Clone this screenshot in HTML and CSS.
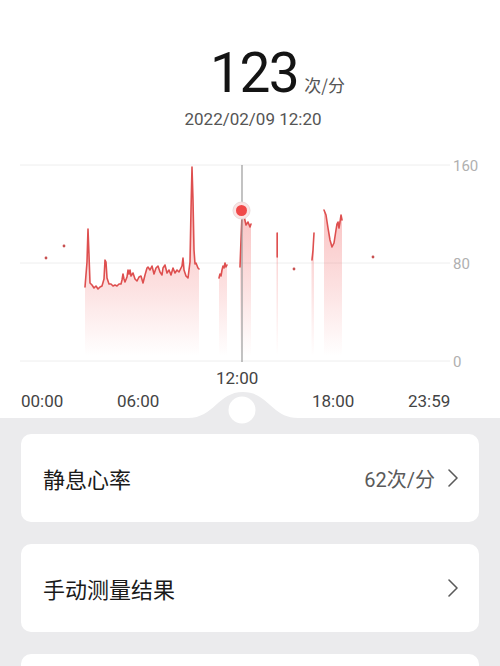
FILE: index.html
```html
<!DOCTYPE html>
<html lang="zh">
<head>
<meta charset="utf-8">
<link rel="stylesheet" href="styles.css">
</head>
<body>
<div class="page">
  <header class="head">
    <div class="value"><span class="num">123</span><span class="unit">次/分</span></div>
    <div class="date">2022/02/09 12:20</div>
  </header>

  <section class="chart">
    <svg class="plot" width="500" height="220" viewBox="0 150 500 220">
      <defs>
        <linearGradient id="fillg" gradientUnits="userSpaceOnUse" x1="0" y1="205" x2="0" y2="356">
          <stop offset="0" stop-color="#f05a5a" stop-opacity="0.38"/>
          <stop offset="0.55" stop-color="#f05a5a" stop-opacity="0.18"/>
          <stop offset="1" stop-color="#f05a5a" stop-opacity="0"/>
        </linearGradient>
      </defs>
      <g class="grid">
        <line x1="20" y1="165" x2="450" y2="165"/>
        <line x1="20" y1="263" x2="450" y2="263"/>
        <line x1="20" y1="361" x2="450" y2="361"/>
      </g>
      <g class="ylab">
        <text x="453" y="171">160</text>
        <text x="453" y="269">80</text>
        <text x="453" y="367">0</text>
      </g>

      <g class="area">
        <polygon points="85,356 85,287 87,262 88,229 89,255 90,283 92,285 94,288 96,286 98,289 100,287 102,286 104,279 105,260 106,262 107,278 109,284 111,284 113,286 115,285 117,286 119,284 121,284 122,280 123,274 124,279 125,282 127,277 128,270 129,274 130,270 131,276 133,273 135,279 137,281 139,277 141,276 143,283 145,275 147,268 148,267 150,270 152,266 154,274 156,268 158,266 160,272 162,275 163,268 165,265 167,273 169,270 171,275 173,268 175,273 177,270 179,272 181,268 182,266 183,258 184,270 186,276 188,278 190,262 191,210 192,167 193,200 194,250 195,264 196,263 198,268 199,269 199,356"/>
        <polygon points="219,356 219,278 220,274 221,276 222,270 223,266 224,268 225,263 226,267 227,265 227,356"/>
        <polygon points="240,356 240,267 241,240 242,214 244,216 246,225 248,222 250,227 251,224 251,356"/>
        <polygon points="276.5,356 276.5,233 278,233 278,356"/>
        <polygon points="311.5,356 311.5,258 313,250 314,233 314,356"/>
        <polygon points="324,356 324,210 326,215 328,228 330,240 332,247 334,243 336,230 337,224 338,222 339,228 340,222 341,215 342,220 342,356"/>
      </g>

      <g class="line">
        <polyline points="85,287 87,262 88,229 89,255 90,283 92,285 94,288 96,286 98,289 100,287 102,286 104,279 105,260 106,262 107,278 109,284 111,284 113,286 115,285 117,286 119,284 121,284 122,280 123,274 124,279 125,282 127,277 128,270 129,274 130,270 131,276 133,273 135,279 137,281 139,277 141,276 143,283 145,275 147,268 148,267 150,270 152,266 154,274 156,268 158,266 160,272 162,275 163,268 165,265 167,273 169,270 171,275 173,268 175,273 177,270 179,272 181,268 182,266 183,258 184,270 186,276 188,278 190,262 191,210 192,167 193,200 194,250 195,264 196,263 198,268 199,269"/>
        <polyline points="219,278 220,274 221,276 222,270 223,266 224,268 225,263 226,267 227,265"/>
        <polyline points="240,267 241,240 242,214 244,216 246,225 248,222 250,227 251,224"/>
        <polyline points="277.2,233 277.2,257"/>
        <polyline points="312,260 313,250 314,233"/>
        <polyline points="324,210 326,215 328,228 330,240 332,247 334,243 336,230 337,224 338,222 339,228 340,222 341,215 342,220"/>
      </g>
      <g class="dots">
        <circle cx="46" cy="258" r="1.4"/>
        <circle cx="64" cy="246" r="1.4"/>
        <circle cx="294" cy="269" r="1.4"/>
        <circle cx="373" cy="257" r="1.4"/>
      </g>

      <line class="cursor" x1="242" y1="165" x2="242" y2="362"/>
      <circle class="halo" cx="241.5" cy="210.5" r="8.5"/>
      <circle class="mark" cx="241.5" cy="210.5" r="5.5"/>
    </svg>
    <div class="noon">12:00</div>
    <div class="xaxis">
      <span>00:00</span>
      <span>06:00</span>
      <span>18:00</span>
      <span>23:59</span>
    </div>
  </section>

  <section class="panel">
    <svg class="handle" width="110" height="34" viewBox="0 0 110 34">
      <path d="M0 27 C 26 27, 30 1, 55 1 C 80 1, 84 27, 110 27 L110 34 L0 34 Z" fill="#ebebed"/>
      <circle cx="54" cy="19" r="13.5" fill="#ffffff"/>
    </svg>
    <div class="card">
      <span class="label">静息心率</span>
      <span class="right"><span class="meta">62次/分</span><svg class="chev" width="12" height="20" viewBox="0 0 12 20"><path d="M2 2 L10 10 L2 18" fill="none" stroke="#5a5a5a" stroke-width="1.6" stroke-linecap="round" stroke-linejoin="round"/></svg></span>
    </div>
    <div class="card">
      <span class="label">手动测量结果</span>
      <span class="right"><svg class="chev" width="12" height="20" viewBox="0 0 12 20"><path d="M2 2 L10 10 L2 18" fill="none" stroke="#5a5a5a" stroke-width="1.6" stroke-linecap="round" stroke-linejoin="round"/></svg></span>
    </div>
    <div class="card"></div>
  </section>
</div>
</body>
</html>
```

FILE: styles.css
```css
* { box-sizing: border-box; }
html, body {
  margin: 0;
  padding: 0;
  background: #ffffff;
}
body {
  width: 500px;
  height: 666px;
  overflow: hidden;
  font-family: Roboto, "Noto Sans CJK SC", sans-serif;
  color: #1c1c1c;
}
.page {
  display: flex;
  flex-direction: column;
  height: 666px;
  overflow: hidden;
}
.head {
  padding-top: 45px;
  display: flex;
  flex-direction: column;
  align-items: center;
}
.value {
  display: flex;
  align-items: baseline;
  height: 56px;
  line-height: 56px;
  padding-left: 55px;
}
.num {
  font-size: 55px;
  color: #141414;
  letter-spacing: -1.5px;
}
.unit {
  font-size: 17px;
  color: #555555;
  margin-left: 6px;
  font-family: "Noto Sans CJK SC", sans-serif;
}
.date {
  margin-top: 8px;
  padding-left: 6px;
  font-size: 17px;
  line-height: 20px;
  color: #555555;
}
.chart {
  margin-top: 21px;
  display: flex;
  flex-direction: column;
}
.plot {
  display: block;
}
.grid line {
  stroke: #eeeeee;
  stroke-width: 1;
}
.ylab text {
  font-family: Roboto, sans-serif;
  font-size: 15px;
  fill: #b0b0b0;
}
.area polygon {
  fill: url(#fillg);
}
.line polyline {
  fill: none;
  stroke: #de4f4f;
  stroke-width: 1.6;
  stroke-linejoin: round;
  stroke-linecap: round;
}
.dots circle {
  fill: #c85050;
}
.cursor {
  stroke: #9a9a9a;
  stroke-width: 1.2;
}
.halo {
  fill: #fbe3e3;
  stroke: #eadada;
  stroke-width: 1;
}
.mark {
  fill: #f04848;
}
.noon {
  margin-top: -2px;
  font-size: 17px;
  line-height: 20px;
  color: #444444;
  padding-left: 216px;
}
.xaxis {
  margin-top: 3px;
  display: grid;
  grid-template-columns: 96px 195px 96px auto;
  padding-left: 21px;
  font-size: 17px;
  line-height: 20px;
  color: #444444;
}
.panel {
  position: relative;
  margin-top: 7px;
  background: #ebebed;
  padding: 16px 21px 0 21px;
  display: flex;
  flex-direction: column;
  gap: 22px;
  flex: 1;
  min-height: 0;
}
.handle {
  position: absolute;
  left: 188px;
  top: -27px;
}
.card {
  position: relative;
  background: #ffffff;
  border-radius: 10px;
  height: 88px;
  flex: none;
  display: flex;
  align-items: center;
  justify-content: space-between;
  padding: 0 20px 0 22px;
}
.label {
  font-family: "Noto Sans CJK SC", sans-serif;
  font-size: 22px;
  color: #1a1a1a;
}
.right {
  display: flex;
  align-items: center;
  gap: 12px;
}
.meta {
  font-family: Roboto, "Noto Sans CJK SC", sans-serif;
  font-size: 20px;
  color: #5a5a5a;
}
.chev {
  display: block;
}
```
